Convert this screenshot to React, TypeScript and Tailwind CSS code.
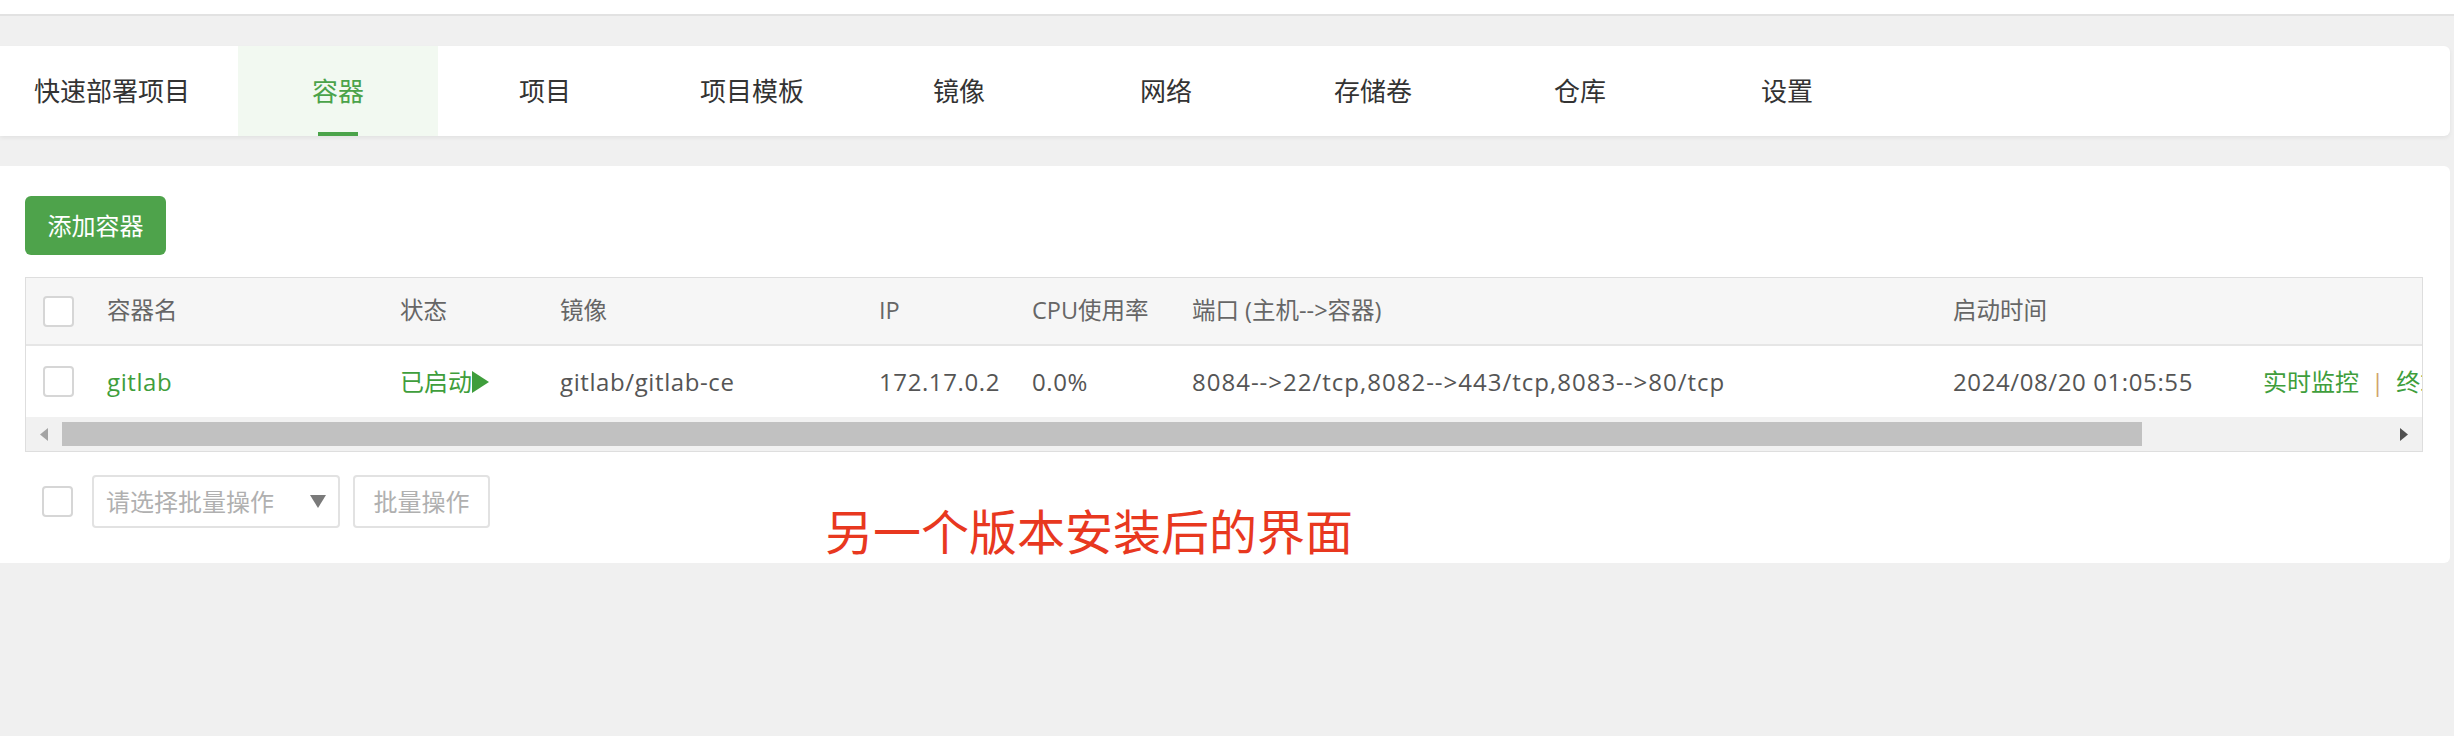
import React from 'react';

const FONT = "'Open Sans', 'Noto Sans CJK SC', sans-serif";

const tabs = ['容器', '项目', '项目模板', '镜像', '网络', '存储卷', '仓库', '设置'];

const Checkbox: React.FC = () => (
    <div className="w-[31px] h-[31px] rounded-[4px] border-2 border-[#d6d6d6] bg-white" />
);

const Triangle: React.FC<{ dir: 'left' | 'right' | 'down'; color: string; w: number; h: number }> = ({ dir, color, w, h }) => {
    const pts = dir === 'left' ? `${w},0 0,${h / 2} ${w},${h}` : dir === 'right' ? `0,0 ${w},${h / 2} 0,${h}` : `0,0 ${w},0 ${w / 2},${h}`;
    return (
        <svg width={w} height={h} viewBox={`0 0 ${w} ${h}`} className="block shrink-0">
            <polygon points={pts} fill={color} />
        </svg>
    );
};

export default function App() {
    return (
        <div className="w-[2454px] h-[736px] bg-[#f0f0f0] overflow-hidden" style={{ fontFamily: FONT }}>
            {/* top strip */}
            <div className="h-[16px] bg-white border-b-2 border-[#e2e2e2]" />

            {/* tab bar */}
            <div className="mt-[30px] mr-[4px] h-[90px] bg-white rounded-r-[6px] shadow-[0_2px_4px_rgba(0,0,0,0.06)] flex">
                <div className="w-[231px] pl-[34px] flex items-center text-[26px] text-[#333]">快速部署项目</div>
                <div className="flex gap-[7px] ml-[7px]">
                    {tabs.map((t, i) => (
                        <div
                            key={t}
                            className={`relative w-[200px] flex items-center justify-center text-[26px] ${i === 0 ? 'bg-[#f2f9f1] text-[#4ba34a]' : 'text-[#333]'}`}
                        >
                            {t}
                            {i === 0 && <div className="absolute bottom-0 left-[80px] w-[40px] h-[4px] bg-[#4ba34a]" />}
                        </div>
                    ))}
                </div>
            </div>

            {/* content card */}
            <div className="relative mt-[30px] mr-[4px] h-[397px] bg-white rounded-r-[6px] pt-[30px] px-[25px]">
                <button className="w-[141px] h-[59px] rounded-[6px] bg-[#4ea34b] text-white text-[24px] flex items-center justify-center">
                    添加容器
                </button>

                {/* table */}
                <div className="mt-[22px] w-[2398px] border border-[#dedede] overflow-hidden">
                    <div className="w-[2500px]">
                        <div className="flex h-[68px] bg-[#f6f6f6] border-b-2 border-[#e6e6e6] text-[23.5px] text-[#666] items-center">
                            <div className="w-[65px] pl-[17px]"><Checkbox /></div>
                            <div className="w-[293px] pl-[16px]">容器名</div>
                            <div className="w-[160px] pl-[16px]">状态</div>
                            <div className="w-[319px] pl-[16px]">镜像</div>
                            <div className="w-[153px] pl-[16px]">IP</div>
                            <div className="w-[160px] pl-[16px]">CPU使用率</div>
                            <div className="w-[761px] pl-[16px]">端口 (主机--&gt;容器)</div>
                            <div className="w-[310px] pl-[16px]">启动时间</div>
                            <div className="w-[279px]" />
                        </div>
                        <div className="flex h-[71px] items-center text-[24px] text-[#555] tracking-[0.6px]">
                            <div className="w-[65px] pl-[17px]"><Checkbox /></div>
                            <div className="w-[293px] pl-[16px] text-[#3f9e3c]">gitlab</div>
                            <div className="w-[160px] pl-[16px] text-[#3f9e3c] flex items-center tracking-normal">
                                已启动
                                <Triangle dir="right" color="#3f9e3c" w={17} h={22} />
                            </div>
                            <div className="w-[319px] pl-[16px]">gitlab/gitlab-ce</div>
                            <div className="w-[153px] pl-[16px]">172.17.0.2</div>
                            <div className="w-[160px] pl-[16px]">0.0%</div>
                            <div className="w-[761px] pl-[16px] tracking-[1px]">8084--&gt;22/tcp,8082--&gt;443/tcp,8083--&gt;80/tcp</div>
                            <div className="w-[310px] pl-[16px]">2024/08/20 01:05:55</div>
                            <div className="w-[279px] pl-[16px] flex items-center text-[#3f9e3c] tracking-normal whitespace-nowrap">
                                实时监控
                                <span className="mx-[12px] text-[#d0a46c]">|</span>
                                终端
                            </div>
                        </div>
                    </div>
                    {/* horizontal scrollbar */}
                    <div className="h-[34px] bg-[#f1f1f1] flex items-center">
                        <div className="w-[36px] flex justify-center">
                            <Triangle dir="left" color="#a3a3a3" w={8} h={13} />
                        </div>
                        <div className="w-[2080px] h-[24px] bg-[#c1c1c1]" />
                        <div className="flex-1 flex justify-end pr-[14px]">
                            <Triangle dir="right" color="#505050" w={8} h={13} />
                        </div>
                    </div>
                </div>

                {/* batch actions */}
                <div className="mt-[23px] flex items-center">
                    <div className="ml-[17px]"><Checkbox /></div>
                    <div className="ml-[19px] w-[248px] h-[53px] border-2 border-[#e2e2e2] rounded-[4px] flex items-center justify-between pl-[12px] pr-[12px] text-[24px] text-[#b0b0b0]">
                        请选择批量操作
                        <Triangle dir="down" color="#7a7a7a" w={16} h={13} />
                    </div>
                    <div className="ml-[13px] w-[137px] h-[53px] border-2 border-[#e2e2e2] rounded-[4px] flex items-center justify-center text-[24px] text-[#b0b0b0]">
                        批量操作
                    </div>
                </div>

                {/* annotation */}
                <div className="absolute left-[825px] top-[336px] text-[48px] leading-[60px] text-[#e8381f]">
                    另一个版本安装后的界面
                </div>
            </div>
        </div>
    );
}
